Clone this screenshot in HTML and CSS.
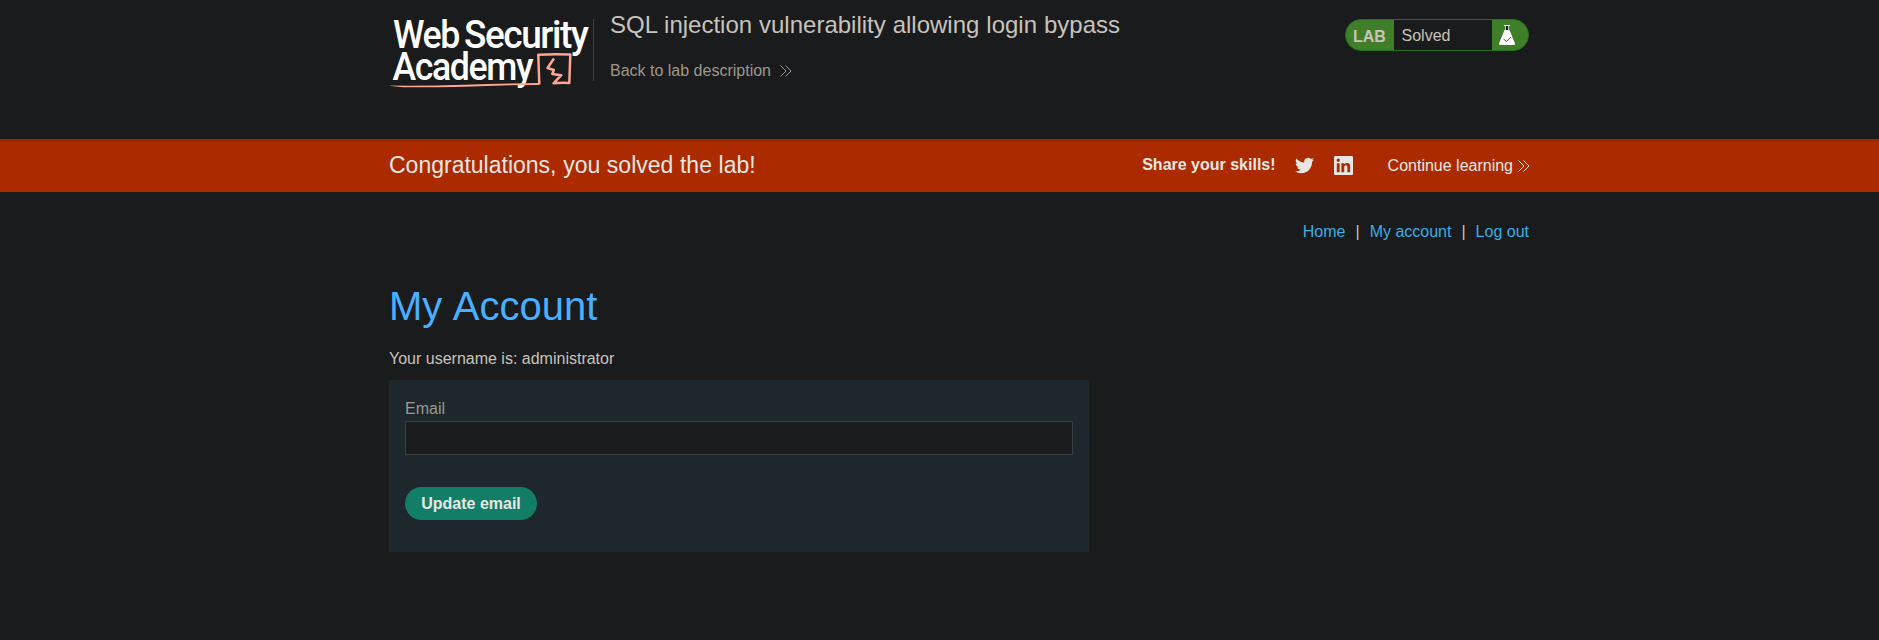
FILE: index.html
```html
<!DOCTYPE html>
<html lang="en">
<head>
<meta charset="utf-8">
<title>SQL injection vulnerability allowing login bypass</title>
<link rel="stylesheet" href="styles.css">
</head>
<body>
<header class="lab-header">
  <div class="container header-row">
    <svg class="logo" width="204" height="92" viewBox="0 0 204 92" role="img" aria-label="Web Security Academy">
      <g class="logo-text">
        <text x="4" y="47.5" textLength="66" lengthAdjust="spacingAndGlyphs">Web</text>
        <text x="75" y="47.5" textLength="123.500" lengthAdjust="spacingAndGlyphs">Security</text>
        <text x="3.500" y="80" textLength="139.500" lengthAdjust="spacingAndGlyphs">Academy</text>
      </g>
      <path class="logo-fill" d="M0 85.500 Q35 86 75 84.700 T150 82.900 V85 Q120 85 90 86.300 T20 87.300 Q8 87.300 0 85.500z"/>
      <path class="logo-line" d="M150.300 84.500 149.300 54.800 Q165 53.600 181.300 54.600 L180.300 83 Q172 82.500 164.500 83.300 L172.300 75.200 163.300 74 164.800 70 158.500 68 165 58.500"/>
    </svg>
    <div class="title-block">
      <h2 class="lab-title">SQL injection vulnerability allowing login bypass</h2>
      <a class="back-link">Back to lab description
        <svg class="chevrons" width="12" height="12" viewBox="0 0 12 12"><path d="M.5.5 6 6 .5 11.500M5.500.5 11 6 5.500 11.500"/></svg>
      </a>
    </div>
    <div class="lab-status">
      <span class="status-tag">LAB</span>
      <span class="status-text">Solved</span>
      <svg class="flask" width="16" height="21" viewBox="0 0 16 21"><path fill="#1a1b1c" d="M6 1h4v5H6z"/><path fill="#fff" d="M5 0h6v1H5zM6 1h.7v5H6zM9.300 1h.7v5h-.7zM5.500 5h5l5.300 13q.7 2-1.300 2h-13Q-.5 20 .2 18z"/><path fill="none" stroke="#666" d="M4.500 14l3 2.500L12 12"/></svg>
    </div>
  </div>
</header>
<section class="banner">
  <div class="container banner-row">
    <h4 class="congrats">Congratulations, you solved the lab!</h4>
    <div class="share">
      <b>Share your skills!</b>
      <svg class="twitter" width="19" height="19" viewBox="0 0 24 24"><path d="M23.950 4.570a10 10 0 0 1-2.820.780 4.960 4.960 0 0 0 2.160-2.720c-.950.550-2 .950-3.130 1.180a4.920 4.920 0 0 0-8.390 4.480C7.690 8.100 4.070 6.130 1.640 3.160a4.820 4.820 0 0 0-.670 2.480c0 1.710.870 3.210 2.190 4.100a4.900 4.900 0 0 1-2.230-.620v.060a4.920 4.920 0 0 0 3.950 4.830 5 5 0 0 1-2.210.080 4.940 4.940 0 0 0 4.600 3.420A9.870 9.870 0 0 1 0 19.540a13.940 13.940 0 0 0 7.550 2.210c9.050 0 14-7.500 14-13.990 0-.210 0-.420-.020-.630a9.940 9.940 0 0 0 2.460-2.550z"/></svg>
      <svg class="linkedin" width="19" height="19" viewBox="0 0 24 24"><path d="M20.450 20.450h-3.550v-5.570c0-1.330-.030-3.040-1.850-3.040-1.850 0-2.140 1.450-2.140 2.940v5.670H9.350V9h3.410v1.560h.050c.480-.900 1.640-1.850 3.370-1.850 3.600 0 4.270 2.370 4.270 5.460v6.280zM5.340 7.430a2.060 2.060 0 1 1 0-4.130 2.060 2.060 0 0 1 0 4.130zM7.120 20.450H3.560V9h3.560v11.450zM22.230 0H1.770C.790 0 0 .770 0 1.730v20.540C0 23.230.790 24 1.770 24h20.450c.980 0 1.780-.770 1.780-1.730V1.730C24 .770 23.200 0 22.220 0z"/></svg>
      <a class="continue">Continue learning <svg class="chevrons" width="12" height="12" viewBox="0 0 12 12"><path d="M.5.5 6 6 .5 11.500M5.500.5 11 6 5.500 11.500"/></svg></a>
    </div>
  </div>
</section>
<main class="container">
  <nav class="nav"><a>Home</a><span>|</span><a>My account</a><span>|</span><a>Log out</a></nav>
  <h1 class="page-title">My Account</h1>
  <p class="username">Your username is: administrator</p>
  <form class="email-form">
    <label class="label" for="email">Email</label>
    <input class="input" id="email" type="email">
    <button class="button" type="button">Update email</button>
  </form>
</main>
</body>
</html>
```
FILE: styles.css
```css
* { box-sizing: border-box; }
body {
  margin: 0;
  background: #1a1b1c;
  color: #c8c3bc;
  font: 16px/20px "Liberation Sans", Arial, sans-serif;
}
h1, h2, h4, p { margin: 0; font-weight: 400; }
.container { width: 1140px; margin-left: 389px; }
.lab-header { height: 139px; }
.header-row { display: flex; align-items: flex-start; }
.logo { flex: none; overflow: visible; }
.logo-text { font: 500 38px Roboto, sans-serif; letter-spacing: -1.5px; fill: #fff; }
.logo-fill { fill: #ffa590; }
.logo-line { fill: none; stroke: #ffa590; stroke-width: 2.5; stroke-linejoin: round; }
.title-block {
  height: 62px;
  margin-top: 19px;
  padding-left: 16px;
  border-left: 1px solid #3b3e40;
}
.lab-title { margin-top: -9px; font-size: 24px; line-height: 30px; word-spacing: .25px; }
.back-link { display: flex; align-items: center; gap: 9px; margin-top: 21px; color: #9f978b; }
.chevrons { flex: none; fill: none; stroke: currentColor; stroke-width: 1; }
.lab-status {
  display: flex;
  align-items: center;
  width: 184px;
  height: 32px;
  margin: 19px 0 0 auto;
  border: 1px solid #24701f;
  border-radius: 16px;
  background: #407f29;
}
.status-tag { width: 48px; padding: 3px 0 0 7px; font-weight: 700; }
.status-text { width: 98px; height: 30px; padding-left: 7.5px; background: #1a1b1c; line-height: 31px; }
.flask { margin: 0 0 0 7px; }
.banner { height: 53px; border-top: 3px solid #9f2800; background: #ab2a00; color: #e8e6e3; }
.banner-row { display: flex; align-items: center; justify-content: space-between; height: 45px; }
.congrats { font-size: 23px; line-height: 28px; word-spacing: .25px; }
.share { display: flex; align-items: center; margin-right: -1px; }
.twitter, .linkedin { fill: #e8e6e3; }
.twitter { margin: 2px 0 0 19px; }
.linkedin { margin: 2px 0 0 20px; }
.continue { display: flex; align-items: center; gap: 5px; margin-left: 35px; padding-top: 2px; }
.nav { display: flex; justify-content: flex-end; gap: 10px; padding-top: 30px; }
.nav a { color: #3cade3; }
.page-title { margin-top: 39px; color: #48b0ff; font-size: 40px; line-height: 50px; word-spacing: 1.5px; }
.username { margin-top: 18px; }
.email-form { width: 700px; height: 172px; margin-top: 11px; padding: 19px 16px 0; background: #1d272c; }
.label { display: block; color: #9f978b; }
.input { display: block; width: 668px; height: 34px; margin-top: 2px; border: 1px solid #3b3e3f; background: #1a1b1c; }
.button {
  display: block;
  width: 132px;
  height: 33px;
  margin-top: 32px;
  padding: 0;
  border: 0;
  border-radius: 17px;
  background: #137e67;
  color: #e8e6e3;
  font: 700 16px/33px "Liberation Sans", Arial, sans-serif;
}
```
